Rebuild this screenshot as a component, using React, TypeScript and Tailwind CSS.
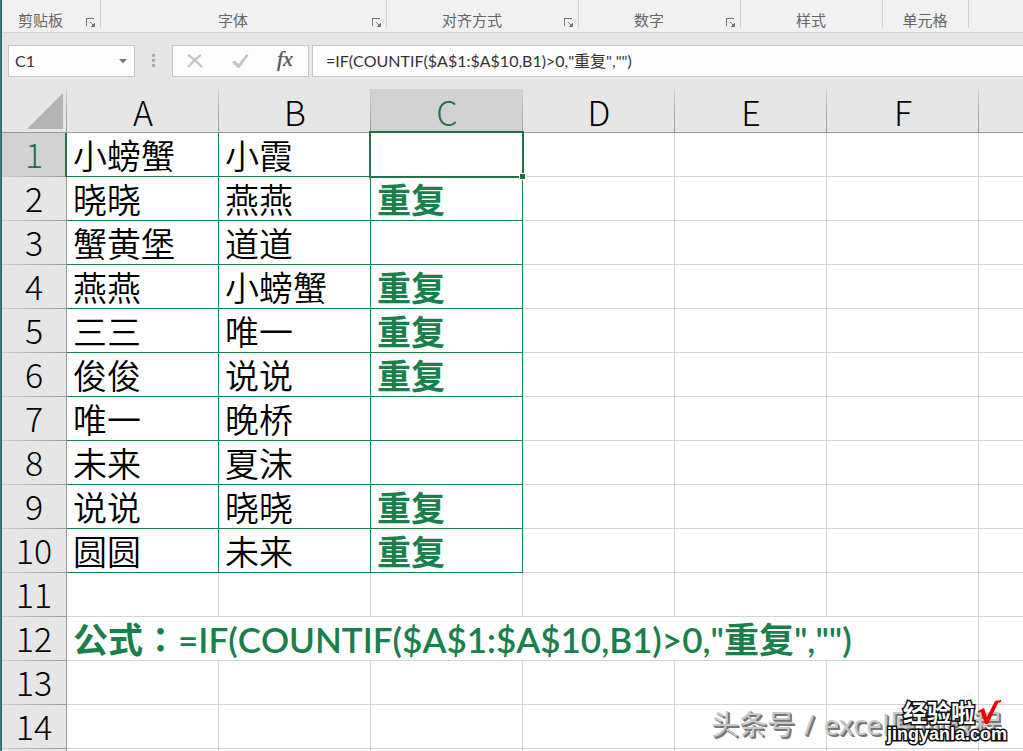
import React from "react";

type Row = [string, string, string];

const rows: Row[] = [
  ["小螃蟹", "小霞", ""],
  ["晓晓", "燕燕", "重复"],
  ["蟹黄堡", "道道", ""],
  ["燕燕", "小螃蟹", "重复"],
  ["三三", "唯一", "重复"],
  ["俊俊", "说说", "重复"],
  ["唯一", "晚桥", ""],
  ["未来", "夏沫", ""],
  ["说说", "晓晓", "重复"],
  ["圆圆", "未来", "重复"],
];

const groups = [
  { label: "剪贴板", width: "w-[99px]", align: "justify-start pl-4", launcher: true },
  { label: "字体", width: "w-[286px]", align: "justify-center pr-[22px]", launcher: true },
  { label: "对齐方式", width: "w-[192px]", align: "justify-center pr-[22px]", launcher: true },
  { label: "数字", width: "w-[162px]", align: "justify-center pr-[22px]", launcher: true },
  { label: "样式", width: "w-[142px]", align: "justify-center pr-[2px]", launcher: false },
  { label: "单元格", width: "w-[86px]", align: "justify-center pr-[2px]", launcher: false },
];

function Launcher({ label }: { label: string }) {
  return (
    <button type="button" aria-label={label} className="absolute right-[5px] bottom-1">
      <svg width="10" height="10" viewBox="0 0 10 10" fill="none" stroke="#777" shapeRendering="crispEdges" className="block">
        <path d="M0.500 8V0.500H8" />
        <path d="M4 4L7 7" />
        <path d="M9 4v5H4z" fill="#777" stroke="none" />
      </svg>
    </button>
  );
}

function Ribbon() {
  return (
    <div className="flex h-[33px] border-b border-[#d4d4d4] bg-[#f1f1f1] text-[15px] leading-5 text-[#666]">
      {groups.map((g) => (
        <div key={g.label} className={`relative flex shrink-0 pt-[10px] ${g.width} ${g.align}`}>
          <span>{g.label}</span>
          {g.launcher && <Launcher label={`${g.label}设置`} />}
          <span className="absolute top-0 right-0 h-7 w-px bg-[#cfcfcf]" />
        </div>
      ))}
    </div>
  );
}

function FormulaBar() {
  return (
    <div className="flex h-14 bg-[#e6e6e6] pt-3 pl-[6px] text-base text-[#333]">
      <div className="flex h-8 w-[127px] items-center border border-[#c6c6c6] bg-[#fdfdfd]">
        <input aria-label="名称框" defaultValue="C1" className="w-24 bg-transparent pl-[6px] font-['Lato','Noto_Sans_CJK_SC',sans-serif] outline-none" />
        <button type="button" aria-label="展开名称框" className="ml-[14px]">
          <svg width="8" height="5" viewBox="0 0 8 5" className="block">
            <path d="M0 0h8L4 4.500z" fill="#777" />
          </svg>
        </button>
      </div>
      <div className="flex w-[37px] flex-col items-center justify-center gap-[2px] pb-[13px]">
        <span className="size-[3px] bg-[#ababab]" />
        <span className="size-[3px] bg-[#ababab]" />
        <span className="size-[3px] bg-[#ababab]" />
      </div>
      <div className="flex h-8 w-[137px] items-center border border-[#c6c6c6] bg-[#fdfdfd]">
        <button type="button" aria-label="取消" className="ml-[14px]">
          <svg width="16" height="16" viewBox="0 0 16 16" fill="none" stroke="#c4c4c4" strokeWidth="2.200" className="block">
            <path d="M1 2C6 5 11 10 15 14M14 2C9 5 5 10 1 14" />
          </svg>
        </button>
        <button type="button" aria-label="输入" className="ml-7">
          <svg width="19" height="16" viewBox="0 0 19 16" className="block">
            <path d="M1 9.500l3-2 3.500 3.500L15.500 1l2 1.500L8.500 15H7z" fill="#c4c4c4" />
          </svg>
        </button>
        <button type="button" aria-label="插入函数" className="ml-[27px] pb-1 font-['Liberation_Serif',serif] text-[22px] leading-6 text-[#5a5a5a] italic [text-shadow:0_0_1px_#777]">
          fx
        </button>
      </div>
      <input
        aria-label="编辑栏"
        defaultValue={'=IF(COUNTIF($A$1:$A$10,B1)>0,"重复","")'}
        className="ml-[3px] h-8 min-w-0 flex-1 border border-r-0 border-[#c6c6c6] bg-[#fdfdfd] pb-[2px] pl-[13px] font-['Lato','Noto_Sans_CJK_SC',sans-serif] outline-none [font-kerning:none]"
      />
    </div>
  );
}

function RowHeader({ n }: { n: number }) {
  const active = n === 1;
  return (
    <th
      scope="row"
      className={`relative h-11 border-r p-0 pb-[2px] text-center font-light ${
        active ? "border-[#217346] bg-[#d2d2d2] text-[#217346]" : "border-[#9b9b9b] bg-[#e6e6e6]"
      }`}
    >
      {n <= 14 && n}
      <span className="absolute bottom-0 left-0 h-px w-full bg-linear-to-r from-[#cfcfcf] to-[#999]" />
      {active && <span className="absolute top-0 right-0 h-full w-px bg-[#217346]" />}
    </th>
  );
}

const cell = "relative h-11 border-r border-b p-0 pl-[6px] text-left align-middle whitespace-nowrap";

function Sheet() {
  return (
    <table className="w-full table-fixed border-separate border-spacing-0 text-[34px] leading-10 text-black">
      <colgroup>
        <col className="w-[65px]" />
        <col className="w-[152px]" />
        <col className="w-[152px]" />
        <col className="w-[152px]" />
        <col className="w-[152px]" />
        <col className="w-[152px]" />
        <col className="w-[152px]" />
        <col />
      </colgroup>
      <thead>
        <tr className="bg-[#e6e6e6]">
          <th className="relative h-11 border-b border-[#999] p-0">
            <svg width="36" height="36" viewBox="0 0 36 36" className="ml-[25px] block" aria-hidden="true">
              <path d="M36 0v36H0z" fill="#b4b4b4" />
            </svg>
            <span className="absolute top-0 right-0 h-full w-px bg-linear-to-b from-[#d0d0d0] to-[#999]" />
          </th>
          {["A", "B", "C", "D", "E", "F"].map((c) => (
            <th
              key={c}
              scope="col"
              className={`relative h-11 border-b border-[#999] p-0 pt-[2px] text-center font-light ${c === "C" ? "bg-[#d2d2d2] text-[#217346]" : ""}`}
            >
              {c}
              <span className="absolute top-0 right-0 h-full w-px bg-linear-to-b from-[#d0d0d0] to-[#999]" />
            </th>
          ))}
          <th className="border-b border-[#999] p-0" />
        </tr>
      </thead>
      <tbody>
        {rows.map((r, i) => (
          <tr key={i}>
            <RowHeader n={i + 1} />
            <td className={`${cell} border-[#1d7f4b] font-[350]`}>{r[0]}</td>
            <td className={`${cell} border-[#1d7f4b] font-[350]`}>{r[1]}</td>
            <td className={`${cell} border-[#1d7f4b] font-bold text-[#1a7f4b]`}>
              {r[2]}
              {i === 0 && (
                <>
                  <span className="absolute -top-[2px] -right-[2px] -bottom-[2px] -left-[2px] z-10 border-2 border-[#217346]" />
                  <span className="absolute -right-[4px] -bottom-[4px] z-20 size-[7px] border border-white bg-[#217346]" />
                </>
              )}
            </td>
            <td className={`${cell} border-[#d4d4d4]`} />
            <td className={`${cell} border-[#d4d4d4]`} />
            <td className={`${cell} border-[#d4d4d4]`} />
            <td className={`${cell} border-r-0 border-[#d4d4d4]`} />
          </tr>
        ))}
        {[11, 12, 13, 14, 15].map((n) => (
          <tr key={n}>
            <RowHeader n={n} />
            {n === 12 ? (
              <td
                colSpan={6}
                className={`${cell} border-[#d4d4d4] font-['Lato','Noto_Sans_CJK_SC',sans-serif] text-[35px] font-semibold text-[#1a7f4b] [font-kerning:none]`}
              >
                公式<span className="font-['Noto_Sans_CJK_TC',sans-serif]">：</span>=IF(COUNTIF($A$1:$A$10,B1)&gt;0,"重复","")
              </td>
            ) : (
              [0, 1, 2, 3, 4, 5].map((k) => <td key={k} className={`${cell} border-[#d4d4d4]`} />)
            )}
            <td className={`${cell} border-r-0 border-[#d4d4d4]`} />
          </tr>
        ))}
      </tbody>
    </table>
  );
}

function Watermark() {
  return (
    <div className="pointer-events-none absolute right-4 bottom-0 z-30 h-16 w-[296px]">
      <p className="absolute bottom-[9px] left-0 flex gap-2 font-['Noto_Sans','Noto_Sans_CJK_SC',sans-serif] text-[28px] leading-9 whitespace-nowrap text-[#c9c9c9] [text-shadow:1px_1px_0_#777,2px_2px_0_#777]">
        <span>头条号</span>
        <span className="px-[1px]">/</span>
        <span>excel原创教程</span>
      </p>
      <div className="absolute right-0 bottom-[7px] font-bold text-white [-webkit-text-stroke:3px_#111] [paint-order:stroke_fill]">
        <p className="pl-4 text-2xl leading-6">经验啦</p>
        <p className="font-['Liberation_Sans',sans-serif] text-[18px] leading-5">jingyanla.com</p>
        <svg width="26" height="26" viewBox="0 0 26 26" className="absolute top-0 right-1">
          <path d="M1 11l6-3 3 9L18 1l6-1v2l-3 1L11 24H8L4 12l-3 1z" fill="#f20000" />
        </svg>
      </div>
    </div>
  );
}

export default function App() {
  return (
    <div className="relative h-screen overflow-hidden border-l border-[#4a6f98] bg-white font-['Noto_Sans_CJK_SC',sans-serif]">
      <div className="border-l border-[#217346]">
        <Ribbon />
        <FormulaBar />
        <Sheet />
      </div>
      <Watermark />
    </div>
  );
}
